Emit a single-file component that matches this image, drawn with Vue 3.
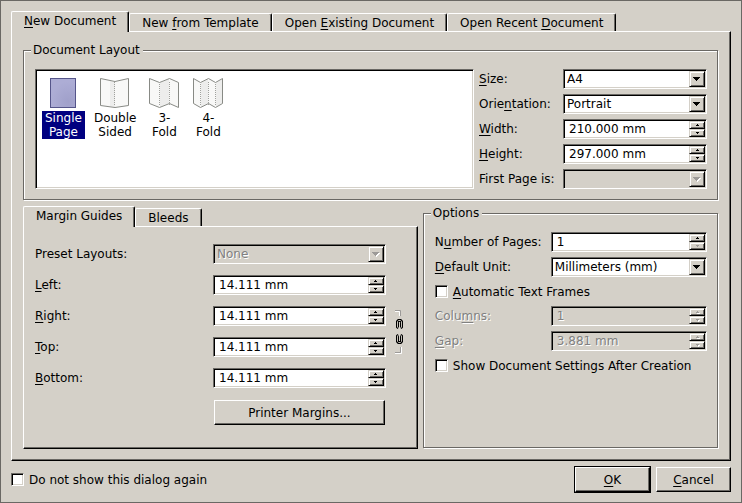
<script setup>
import { ref } from 'vue'

const tabs = [
  { pre: '', key: 'N', post: 'ew Document' },
  { pre: 'New ', key: 'f', post: 'rom Template' },
  { pre: 'Open ', key: 'E', post: 'xisting Document' },
  { pre: 'Open Recent ', key: 'D', post: 'ocument' }
]
const activeTab = ref(0)
const innerTabs = ['Margin Guides', 'Bleeds']
const activeInner = ref(0)

const layouts = [
  { lines: ['Single', 'Page'], single: true },
  {
    lines: ['Double', 'Sided'],
    outline: '0.5,0.5 15,3.5 28.5,0.5 28.5,27.5 15,29.5 0.5,27.5',
    shades: ['10,3 15,4 15,29 10,28'],
    folds: [14.5]
  },
  {
    lines: ['3-', 'Fold'],
    outline: '0.5,0.5 10.5,4.5 20.5,0.5 29.5,4.5 29.5,29.5 20.5,25.5 10.5,29.5 0.5,25.5',
    shades: ['11,4.5 20,1 20,25 11,29'],
    folds: [10.5, 20.5]
  },
  {
    lines: ['4-', 'Fold'],
    outline: '0.5,0.5 7.5,4.5 15.5,0.5 22.5,4.5 29.5,0.5 29.5,25.5 22.5,29.5 15.5,25.5 7.5,29.5 0.5,25.5',
    shades: ['8,4.5 15,1 15,25 8,29', '23,4.5 29,1 29,25 23,29'],
    folds: [7.5, 15.5, 22.5]
  }
]
const selectedLayout = ref(0)

const pageFields = [
  { id: 'size', pre: '', key: 'S', post: 'ize:', kind: 'combo', value: 'A4' },
  { id: 'orientation', pre: 'Orie', key: 'n', post: 'tation:', kind: 'combo', value: 'Portrait' },
  { id: 'width', pre: '', key: 'W', post: 'idth:', kind: 'spin', value: '210.000 mm' },
  { id: 'height', pre: '', key: 'H', post: 'eight:', kind: 'spin', value: '297.000 mm' },
  { id: 'first', pre: 'First Page is:', key: '', post: '', kind: 'combo', value: '', disabled: true }
]
const marginFields = [
  { id: 'preset', pre: 'Preset Layouts:', key: '', post: '', kind: 'combo', value: 'None', disabled: true },
  { id: 'left', pre: '', key: 'L', post: 'eft:', kind: 'spin', value: '14.111 mm' },
  { id: 'right', pre: '', key: 'R', post: 'ight:', kind: 'spin', value: '14.111 mm' },
  { id: 'top', pre: '', key: 'T', post: 'op:', kind: 'spin', value: '14.111 mm' },
  { id: 'bottom', pre: '', key: 'B', post: 'ottom:', kind: 'spin', value: '14.111 mm' }
]
const optionFields = [
  { id: 'pages', pre: 'N', key: 'u', post: 'mber of Pages:', kind: 'spin', value: '1', atMin: true },
  { id: 'unit', pre: '', key: 'D', post: 'efault Unit:', kind: 'combo', value: 'Millimeters (mm)' },
  { id: 'auto', pre: '', key: 'A', post: 'utomatic Text Frames', kind: 'check' },
  { id: 'columns', pre: 'Colu', key: 'm', post: 'ns:', kind: 'spin', value: '1', disabled: true, dimLabel: true },
  { id: 'gap', pre: '', key: 'G', post: 'ap:', kind: 'spin', value: '3.881 mm', disabled: true, dimLabel: true },
  { id: 'after', pre: 'Show Document Settings After Creation', key: '', post: '', kind: 'check' }
]
const groups = { page: pageFields, margin: marginFields, option: optionFields }
</script>

<template>
  <main class="dialog">
    <section class="tabbed">
      <div class="tabs" role="tablist">
        <button
          v-for="(t, i) in tabs"
          :key="t.post"
          type="button"
          role="tab"
          class="tab"
          :class="{ active: activeTab === i }"
          :aria-selected="activeTab === i"
          @click="activeTab = i"
        >{{ t.pre }}<u>{{ t.key }}</u>{{ t.post }}</button>
      </div>

      <div class="panel outer">
        <fieldset class="group">
          <legend>Document Layout</legend>
          <div class="layout-row">
            <div class="list sunken">
              <button
                v-for="(l, i) in layouts"
                :key="l.lines[0]"
                type="button"
                class="layout"
                :class="{ selected: selectedLayout === i }"
                @click="selectedLayout = i"
              >
                <svg v-if="l.single" width="30" height="30" viewBox="0 0 30 30" aria-hidden="true">
                  <defs>
                    <radialGradient id="sheet" cx="0.7" cy="0.8" r="0.7">
                      <stop offset="0" stop-color="#a0a0ca" />
                      <stop offset="1" stop-color="#adadd5" />
                    </radialGradient>
                  </defs>
                  <rect x="2.5" y="0.5" width="25" height="29" fill="url(#sheet)" stroke="#55558a" />
                </svg>
                <svg v-else width="30" height="30" viewBox="0 0 30 30" aria-hidden="true">
                  <polygon :points="l.outline" fill="#f8f8f7" />
                  <polygon v-for="s in l.shades" :key="s" :points="s" fill="#ededec" />
                  <polygon :points="l.outline" fill="none" stroke="#888a85" />
                  <line v-for="f in l.folds" :key="f" :x1="f" :x2="f" y1="4" y2="28" stroke="#a0a19d" stroke-dasharray="1 1" />
                </svg>
                <span class="caption">{{ l.lines[0] }}<br>{{ l.lines[1] }}</span>
              </button>
            </div>

            <div class="fields page">
              <template v-for="f in groups.page" :key="f.id">
                <label :for="f.id">{{ f.pre }}<u>{{ f.key }}</u>{{ f.post }}</label>
                <div class="field sunken" :class="[f.kind, { disabled: f.disabled }]">
                  <template v-if="f.kind === 'combo'">
                    <select :id="f.id" :disabled="f.disabled"><option>{{ f.value }}</option></select>
                    <span class="drop raised"><svg width="8" height="5" viewBox="0 0 8 5" aria-hidden="true"><path d="M0 0H7V1H6V2H5V3H4V4H3V3H2V2H1V1H0Z" /></svg></span>
                  </template>
                  <template v-else>
                    <input :id="f.id" type="text" :value="f.value">
                    <span class="steps">
                      <button type="button" class="raised" aria-label="Increase"><svg width="3" height="2" viewBox="0 0 3 2"><path d="M1 0H2V1H3V2H0V1H1Z" /></svg></button>
                      <button type="button" class="raised" aria-label="Decrease"><svg width="3" height="2" viewBox="0 0 3 2"><path d="M0 0H3V1H2V2H1V1H0Z" /></svg></button>
                    </span>
                  </template>
                </div>
              </template>
            </div>
          </div>
        </fieldset>

        <div class="lower">
          <section class="tabbed">
            <div class="tabs" role="tablist">
              <button
                v-for="(t, i) in innerTabs"
                :key="t"
                type="button"
                role="tab"
                class="tab"
                :class="{ active: activeInner === i }"
                :aria-selected="activeInner === i"
                @click="activeInner = i"
              >{{ t }}</button>
            </div>
            <div class="panel inner">
              <div class="fields margins">
                <template v-for="f in groups.margin" :key="f.id">
                  <label :for="f.id">{{ f.pre }}<u>{{ f.key }}</u>{{ f.post }}</label>
                  <div class="field sunken" :class="[f.kind, { disabled: f.disabled }]">
                    <template v-if="f.kind === 'combo'">
                      <select :id="f.id" :disabled="f.disabled"><option>{{ f.value }}</option></select>
                      <span class="drop raised"><svg width="8" height="5" viewBox="0 0 8 5" aria-hidden="true"><path d="M0 0H7V1H6V2H5V3H4V4H3V3H2V2H1V1H0Z" /></svg></span>
                    </template>
                    <template v-else>
                      <input :id="f.id" type="text" :value="f.value">
                      <span class="steps">
                        <button type="button" class="raised" aria-label="Increase"><svg width="3" height="2" viewBox="0 0 3 2"><path d="M1 0H2V1H3V2H0V1H1Z" /></svg></button>
                        <button type="button" class="raised" aria-label="Decrease"><svg width="3" height="2" viewBox="0 0 3 2"><path d="M0 0H3V1H2V2H1V1H0Z" /></svg></button>
                      </span>
                    </template>
                  </div>
                </template>
                <button type="button" class="chain" aria-label="Link margins">
                  <svg width="9" height="44" viewBox="0 0 9 44" aria-hidden="true">
                    <path d="M0 0.5H5.5V6M5.5 37V42.5H0" fill="none" stroke="#9c9a98" />
                    <path d="M0 1.5H4.5V6M6.5 37V43.5H0" fill="none" stroke="#fff" />
                    <g fill="none">
                      <path d="M3.5 18L2.5 17V11.5L3.5 10.5H5.5L6.5 11.5V17L5.5 18" stroke="#000" stroke-width="3" />
                      <path d="M3.5 18L2.5 17V11.5L3.5 10.5H5.5L6.5 11.5V17L5.5 18" stroke="#c4c0b8" />
                      <path d="M4.5 14V19" stroke="#d4d0c8" />
                      <path d="M3.5 25L2.5 26V31.5L3.5 32.5H5.5L6.5 31.5V26L5.5 25" stroke="#000" stroke-width="3" />
                      <path d="M3.5 25L2.5 26V31.5L3.5 32.5H5.5L6.5 31.5V26L5.5 25" stroke="#c4c0b8" />
                      <path d="M4.5 24V29" stroke="#d4d0c8" />
                    </g>
                  </svg>
                </button>
                <button type="button" class="push raised printer">Printer Margins...</button>
              </div>
            </div>
          </section>

          <fieldset class="group">
            <legend>Options</legend>
            <div class="fields options">
              <template v-for="f in groups.option" :key="f.id">
                <label v-if="f.kind === 'check'" class="check">
                  <input type="checkbox" class="sunken">
                  <span>{{ f.pre }}<u>{{ f.key }}</u>{{ f.post }}</span>
                </label>
                <template v-else>
                  <label :for="f.id" :class="{ dim: f.dimLabel }">{{ f.pre }}<u>{{ f.key }}</u>{{ f.post }}</label>
                  <div class="field sunken" :class="[f.kind, { disabled: f.disabled }]">
                    <template v-if="f.kind === 'combo'">
                      <select :id="f.id"><option>{{ f.value }}</option></select>
                      <span class="drop raised"><svg width="8" height="5" viewBox="0 0 8 5" aria-hidden="true"><path d="M0 0H7V1H6V2H5V3H4V4H3V3H2V2H1V1H0Z" /></svg></span>
                    </template>
                    <template v-else>
                      <input :id="f.id" type="text" :value="f.value" :disabled="f.disabled">
                      <span class="steps">
                        <button type="button" class="raised" aria-label="Increase" :disabled="f.disabled"><svg width="3" height="2" viewBox="0 0 3 2"><path d="M1 0H2V1H3V2H0V1H1Z" /></svg></button>
                        <button type="button" class="raised" aria-label="Decrease" :disabled="f.disabled || f.atMin"><svg width="3" height="2" viewBox="0 0 3 2"><path d="M0 0H3V1H2V2H1V1H0Z" /></svg></button>
                      </span>
                    </template>
                  </div>
                </template>
              </template>
            </div>
          </fieldset>
        </div>
      </div>
    </section>

    <footer class="footer">
      <label class="check">
        <input type="checkbox" class="sunken">
        <span>Do not show this dialog again</span>
      </label>
      <button type="button" class="push raised default"><u>O</u>K</button>
      <button type="button" class="push raised"><u>C</u>ancel</button>
    </footer>
  </main>
</template>

<style>
body {
  margin: 0;
  background: #d4d0c8;
}
</style>

<style scoped>
* {
  box-sizing: border-box;
}
.dialog {
  --face: #d4d0c8;
  --shade: #6a6864;
  display: flex;
  flex-direction: column;
  gap: 6px;
  min-height: 100vh;
  padding: 10px;
  border: 1px solid var(--shade);
  background: var(--face);
  color: #000;
  font: 12px/16px "DejaVu Sans", sans-serif;
}
button,
input,
select {
  margin: 0;
  padding: 0;
  border: 0;
  border-radius: 0;
  background: none;
  color: inherit;
  font: inherit;
  outline: 0;
  appearance: none;
}
u {
  text-decoration-thickness: 1px;
  text-underline-offset: 2px;
  text-decoration-skip-ink: none;
}
.sunken {
  border: 1px solid;
  border-color: var(--shade) #fff #fff var(--shade);
  background: #fff;
  box-shadow: inset 1px 1px 0 #000, inset -1px -1px 0 var(--face);
}
.raised {
  border: 1px solid;
  border-color: #fff #000 #000 #fff;
  background: var(--face);
  box-shadow: inset -1px -1px 0 var(--shade);
}

/* tabs */
.tabbed {
  display: flex;
  flex: 1;
  flex-direction: column;
  min-width: 0;
}
.tabs {
  display: flex;
  align-items: flex-end;
}
.tab {
  height: 18px;
  padding: 0 12px;
  border: 1px solid;
  border-color: #fff #000 transparent #fff;
  border-bottom: 0;
  border-radius: 2px 2px 0 0;
  box-shadow: inset -1px 0 0 var(--shade);
  white-space: nowrap;
}
.tab.active {
  position: relative;
  height: 21px;
  margin-bottom: -1px;
  padding-bottom: 2px;
  background: var(--face);
}
.panel {
  display: flex;
  flex: 1;
  flex-direction: column;
  border: 1px solid;
  border-color: #fff #000 #000 #fff;
  box-shadow: inset -1px -1px 0 var(--shade);
}
.outer {
  gap: 5px;
  padding: 11px;
}
.inner {
  padding: 17px 13px 17px 11px;
}
.lower {
  display: grid;
  flex: 1;
  grid-template-columns: 4fr 3fr;
  gap: 5px;
}

/* etched group boxes */
.group {
  min-width: 0;
  margin: 0 1px 1px 0;
  padding: 12px 10px 10px 11px;
  border: 1px solid var(--shade);
  box-shadow: 1px 1px 0 #fff, inset 1px 1px 0 #fff;
}
.group legend {
  margin-left: -4px;
  padding: 0 3px 0 2px;
  background: var(--face);
  line-height: 14px;
}
.layout-row {
  display: grid;
  grid-template-columns: minmax(0, 1fr) 228px;
  gap: 5px;
}
.list {
  display: flex;
  gap: 6px;
  align-items: flex-start;
  padding: 8px 6px;
}
.layout {
  display: flex;
  flex-direction: column;
  gap: 3px;
  align-items: center;
  min-width: 38px;
}
.caption {
  padding: 0 3px;
  line-height: 14px;
}
.selected .caption {
  background: #000080;
  color: #fff;
}

/* form rows */
.fields {
  display: grid;
  align-items: center;
}
.page {
  grid-template-columns: 84px minmax(0, 1fr);
  row-gap: 5px;
}
.margins {
  grid-template-columns: 178px minmax(0, 1fr) 18px;
  row-gap: 11px;
}
.margins label {
  grid-column: 1;
}
.options {
  grid-template-columns: 116px minmax(0, 1fr);
  row-gap: 5px;
}
.options .check {
  grid-column: 1 / -1;
  height: 19px;
}
.fields label {
  white-space: nowrap;
}
.field {
  display: flex;
  height: 20px;
  padding: 1px;
}
.field input,
.field select {
  flex: 1;
  min-width: 0;
  height: 16px;
}
.field select {
  padding-left: 2px;
}
.field input {
  padding-left: 4px;
}
.drop {
  display: flex;
  align-items: center;
  justify-content: center;
  width: 16px;
  margin-left: -16px;
  border-color: var(--face) #000 #000 var(--face);
  box-shadow: inset 1px 1px 0 #fff, inset -1px -1px 0 var(--shade);
  pointer-events: none;
}
.steps {
  display: flex;
  flex-direction: column;
  width: 16px;
}
.steps button {
  display: flex;
  flex: 1;
  align-items: center;
  justify-content: center;
  border-color: var(--face) #000 #000 var(--face);
  box-shadow: inset 1px 1px 0 #fff, inset -1px -1px 0 var(--shade);
}
.steps button:disabled path,
.disabled .drop path {
  fill: #9c9a98;
}
.disabled svg {
  filter: drop-shadow(1px 1px 0 #fff);
}
.field.disabled {
  background: var(--face);
}
.dim,
.disabled input,
.disabled select {
  color: #808080;
  opacity: 1;
  text-shadow: 1px 1px 0 #fff;
}
.chain {
  display: flex;
  grid-row: 3 / 5;
  grid-column: 3;
  justify-self: end;
}
.push {
  height: 25px;
}
.printer {
  grid-column: 2;
  margin: 1px;
}

/* check boxes and footer */
.check {
  display: flex;
  gap: 5px;
  align-items: center;
}
.check input {
  width: 13px;
  height: 13px;
}
.footer {
  display: flex;
  gap: 6px;
  align-items: center;
}
.footer .check {
  flex: 1;
}
.footer .push {
  width: 75px;
}
.default {
  outline: 1px solid #000;
}
</style>
